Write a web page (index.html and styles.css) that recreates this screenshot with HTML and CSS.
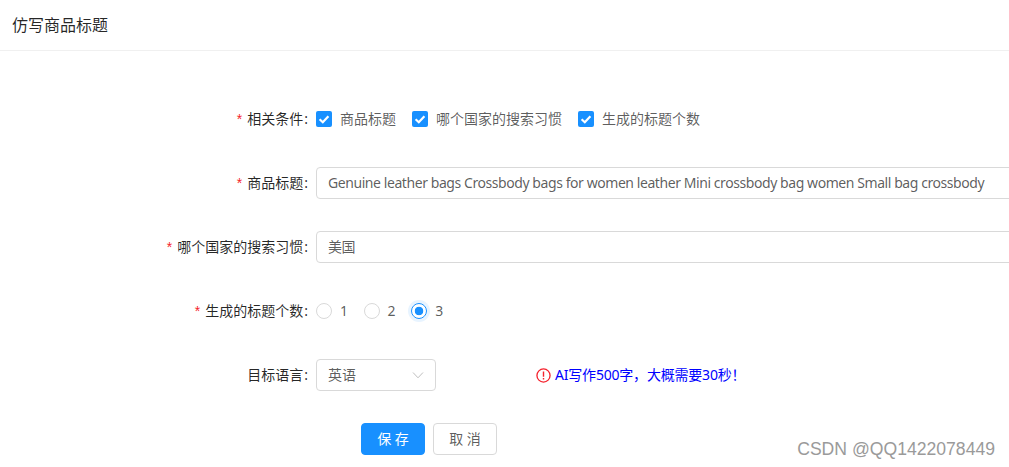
FILE: index.html
```html
<!DOCTYPE html>
<html lang="zh-CN">
<head>
<meta charset="utf-8">
<title>仿写商品标题</title>
<link rel="stylesheet" href="styles.css">
</head>
<body>
<div class="page">
  <header class="header">仿写商品标题</header>
  <form class="form">
    <div class="row">
      <div class="label"><span class="req">*</span>相关条件<span class="colon">:</span></div>
      <div class="control checks">
        <label class="check"><span class="box"><svg viewBox="0 0 16 16" width="16" height="16"><path d="M3.6 8.2 6.8 11.2 12.4 5.2" fill="none" stroke="#fff" stroke-width="2.2"/></svg></span>商品标题</label>
        <label class="check"><span class="box"><svg viewBox="0 0 16 16" width="16" height="16"><path d="M3.6 8.2 6.8 11.2 12.4 5.2" fill="none" stroke="#fff" stroke-width="2.2"/></svg></span>哪个国家的搜索习惯</label>
        <label class="check"><span class="box"><svg viewBox="0 0 16 16" width="16" height="16"><path d="M3.6 8.2 6.8 11.2 12.4 5.2" fill="none" stroke="#fff" stroke-width="2.2"/></svg></span>生成的标题个数</label>
      </div>
    </div>
    <div class="row">
      <div class="label"><span class="req">*</span>商品标题<span class="colon">:</span></div>
      <div class="control"><div class="input">Genuine leather bags Crossbody bags for women leather Mini crossbody bag women Small bag crossbody</div></div>
    </div>
    <div class="row">
      <div class="label"><span class="req">*</span>哪个国家的搜索习惯<span class="colon">:</span></div>
      <div class="control"><div class="input">美国</div></div>
    </div>
    <div class="row">
      <div class="label"><span class="req">*</span>生成的标题个数<span class="colon">:</span></div>
      <div class="control radios">
        <label class="radio"><span class="dot"></span>1</label>
        <label class="radio"><span class="dot"></span>2</label>
        <label class="radio"><span class="dot on"></span>3</label>
      </div>
    </div>
    <div class="row">
      <div class="label">目标语言<span class="colon">:</span></div>
      <div class="control tail">
        <div class="select">英语<svg viewBox="0 0 12 12" width="12" height="12"><path d="M1 3.5 6 8.8 11 3.5" fill="none" stroke="#bfbfbf" stroke-width="1"/></svg></div>
        <div class="tip"><svg viewBox="0 0 16 16" width="15" height="15"><circle cx="8" cy="8" r="7" fill="none" stroke="#f5222d" stroke-width="1.4"/><path d="M8 3.8V9.4M8 10.6V12.2" stroke="#f5222d" stroke-width="1.5"/></svg>AI写作500字，大概需要30秒！</div>
      </div>
    </div>
    <div class="actions">
      <button type="button" class="btn primary">保 存</button>
      <button type="button" class="btn">取 消</button>
    </div>
  </form>
  <div class="mark">CSDN @QQ1422078449</div>
</div>
</body>
</html>
```
FILE: styles.css
```css
* { box-sizing: border-box; }
html, body { margin: 0; height: 100%; overflow: hidden; }
body {
  background: #fff;
  color: rgba(0, 0, 0, .65);
  font: 14px/22px "Noto Sans", "Noto Sans CJK SC", sans-serif;
}
.page { position: relative; width: 1009px; height: 467px; overflow: hidden; }
.header {
  height: 51px;
  padding-top: 13px;
  padding-left: 12px;
  border-bottom: 1px solid #f0f0f0;
  color: rgba(0, 0, 0, .85);
  font-size: 16px;
  line-height: 24px;
}
.form { display: flex; flex-direction: column; gap: 32px; padding-top: 52px; }
.row { display: flex; height: 32px; align-items: center; }
.label {
  flex: none;
  width: 308px;
  margin-right: 8px;
  text-align: right;
  color: rgba(0, 0, 0, .85);
  white-space: nowrap;
}
.req { margin-right: 5px; color: #f5222d; font-family: "Liberation Sans", sans-serif; }
.colon { margin-left: 1px; }
.control { flex: none; width: 700px; }
.checks, .radios, .tail { display: flex; align-items: center; }
.checks { gap: 16px; }
.check, .radio { display: flex; align-items: center; gap: 8px; }
.box { width: 16px; height: 16px; border-radius: 2px; background: #1890ff; }
.box svg { display: block; }
.input {
  width: 720px;
  height: 32px;
  padding: 4px 11px;
  border: 1px solid #d9d9d9;
  border-radius: 4px;
  white-space: nowrap;
  letter-spacing: -.43px;
}
.radios { gap: 16px; letter-spacing: -.4px; }
.dot {
  width: 16px;
  height: 16px;
  border: 1px solid #d9d9d9;
  border-radius: 50%;
}
.dot.on {
  border-color: #1890ff;
  background: radial-gradient(circle, #1890ff 0 4px, #fff 4.6px);
  box-shadow: 0 0 0 3px #e8f4ff;
}
.select {
  display: flex;
  align-items: center;
  justify-content: space-between;
  width: 120px;
  height: 32px;
  padding: 0 11px;
  border: 1px solid #d9d9d9;
  border-radius: 4px;
}
.tip {
  display: flex;
  align-items: center;
  gap: 4px;
  margin-left: 100px;
  color: #0000ff;
  letter-spacing: -.2px;
}
.actions { display: flex; gap: 8px; padding-left: 361px; }
.btn {
  width: 64px;
  height: 32px;
  padding: 0;
  border: 1px solid #d9d9d9;
  border-radius: 4px;
  background: #fff;
  color: rgba(0, 0, 0, .65);
  font: inherit;
}
.btn.primary { border-color: #1890ff; background: #1890ff; color: #fff; }
.mark {
  position: absolute;
  right: 14px;
  top: 439px;
  color: #9a9a9a;
  font: 17.6px/20px "Liberation Sans", sans-serif;
}
```
